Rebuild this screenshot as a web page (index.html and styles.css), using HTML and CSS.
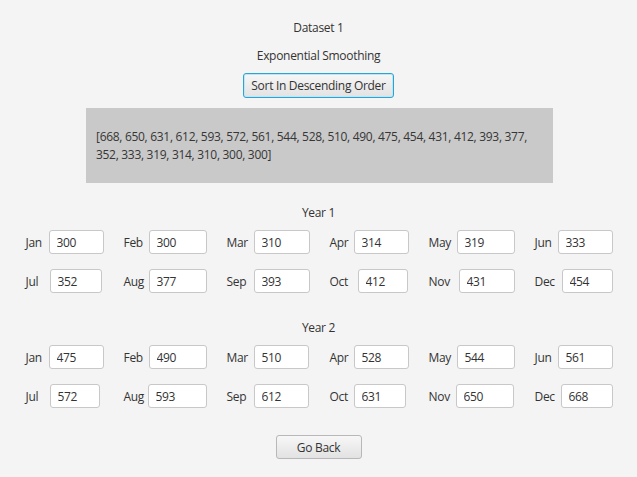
FILE: index.html
```html
<!DOCTYPE html>
<html>
<head>
<meta charset="utf-8">
<link rel="stylesheet" href="styles.css">
</head>
<body>
<main class="page">
  <p class="title">Dataset 1</p>
  <p class="subtitle">Exponential Smoothing</p>
  <button class="btn btn-focus">Sort In Descending Order</button>
  <div class="result">[668, 650, 631, 612, 593, 572, 561, 544, 528, 510, 490, 475, 454, 431, 412, 393, 377,<br>352, 333, 319, 314, 310, 300, 300]</div>

  <section class="year year-first">
    <h2 class="year-label">Year 1</h2>
    <div class="months">
      <div class="cell"><span>Jan</span><input class="field w55" value="300" readonly></div>
      <div class="cell"><span>Feb</span><input class="field w58" value="300" readonly></div>
      <div class="cell"><span>Mar</span><input class="field w56" value="310" readonly></div>
      <div class="cell"><span>Apr</span><input class="field w55" value="314" readonly></div>
      <div class="cell"><span>May</span><input class="field w58" value="319" readonly></div>
      <div class="cell"><span>Jun</span><input class="field w55" value="333" readonly></div>
      <div class="cell"><span>Jul</span><input class="field w52 r2" value="352" readonly></div>
      <div class="cell"><span>Aug</span><input class="field w58" value="377" readonly></div>
      <div class="cell"><span>Sep</span><input class="field w56" value="393" readonly></div>
      <div class="cell"><span>Oct</span><input class="field w50 r1" value="412" readonly></div>
      <div class="cell"><span>Nov</span><input class="field w56" value="431" readonly></div>
      <div class="cell"><span>Dec</span><input class="field w51" value="454" readonly></div>
    </div>
  </section>

  <section class="year">
    <h2 class="year-label">Year 2</h2>
    <div class="months">
      <div class="cell"><span>Jan</span><input class="field w55" value="475" readonly></div>
      <div class="cell"><span>Feb</span><input class="field w58" value="490" readonly></div>
      <div class="cell"><span>Mar</span><input class="field w55 r1" value="510" readonly></div>
      <div class="cell"><span>Apr</span><input class="field w55" value="528" readonly></div>
      <div class="cell"><span>May</span><input class="field w58" value="544" readonly></div>
      <div class="cell"><span>Jun</span><input class="field w55" value="561" readonly></div>
      <div class="cell"><span>Jul</span><input class="field w50 r4" value="572" readonly></div>
      <div class="cell"><span>Aug</span><input class="field w59" value="593" readonly></div>
      <div class="cell"><span>Sep</span><input class="field w55 r1" value="612" readonly></div>
      <div class="cell"><span>Oct</span><input class="field w52 r3" value="631" readonly></div>
      <div class="cell"><span>Nov</span><input class="field w58 r1" value="650" readonly></div>
      <div class="cell"><span>Dec</span><input class="field w52" value="668" readonly></div>
    </div>
  </section>

  <button class="btn back">Go Back</button>
</main>
</body>
</html>
```
FILE: styles.css
```css
* { box-sizing: border-box; }
html, body {
  margin: 0;
  padding: 0;
  background: #f4f4f4;
}
body {
  width: 637px;
  height: 477px;
  overflow: hidden;
  font-family: "Open Sans", "Noto Sans", sans-serif;
  font-size: 12px;
  letter-spacing: -0.3px;
  color: #333333;
}
.page {
  display: flex;
  flex-direction: column;
  align-items: center;
  padding-top: 19px;
}
.title, .subtitle {
  margin: 0;
  line-height: 16px;
}
.title { margin-top: 1px; }
.subtitle { margin-top: 12px; }
.btn {
  font-family: inherit;
  font-size: 12px;
  letter-spacing: -0.3px;
  color: #333333;
  height: 25px;
  padding: 0 8px;
  white-space: nowrap;
  border: 1px solid #b8b8b8;
  border-radius: 3px;
  background: linear-gradient(#f7f7f7, #e2e2e2);
  cursor: default;
}
.btn-focus {
  margin-top: 9px;
  width: 151px;
  padding: 0;
  border-color: #2aa4d5;
  box-shadow: inset 0 0 0 1px #bfe6f5;
}
.result {
  margin-top: 10px;
  margin-left: 2px;
  width: 467px;
  height: 75px;
  background: #c9c9c9;
  padding: 20px 10px 0 10px;
  line-height: 18px;
  white-space: nowrap;
  color: #363636;
}
.year {
  width: 100%;
  display: flex;
  flex-direction: column;
  align-items: center;
  margin-top: 27px;
}
.year-first { margin-top: 22px; }
.year-label {
  margin: 0;
  font-size: 12px;
  font-weight: normal;
  line-height: 16px;
}
.months {
  margin-top: 9px;
  display: grid;
  grid-template-columns: 78px 83px 83px 79px 86px 78px;
  column-gap: 20px;
  row-gap: 15px;
  margin-left: 1px;
}
.cell {
  display: flex;
  align-items: center;
  justify-content: space-between;
  height: 24px;
}
.field {
  height: 24px;
  padding: 0 7px;
  font-family: inherit;
  font-size: 12px;
  letter-spacing: -0.3px;
  color: #333333;
  background: #ffffff;
  border: 1px solid #c8c8c8;
  border-radius: 3px;
  outline: none;
}
.w50 { width: 50px; }
.w51 { width: 51px; }
.w52 { width: 52px; }
.w55 { width: 55px; }
.w56 { width: 56px; }
.w58 { width: 58px; }
.w59 { width: 59px; }
.r1 { margin-right: 1px; }
.r2 { margin-right: 2px; }
.r3 { margin-right: 3px; }
.r4 { margin-right: 4px; }
.back {
  margin-top: 27px;
  width: 86px;
  height: 24px;
}
```
